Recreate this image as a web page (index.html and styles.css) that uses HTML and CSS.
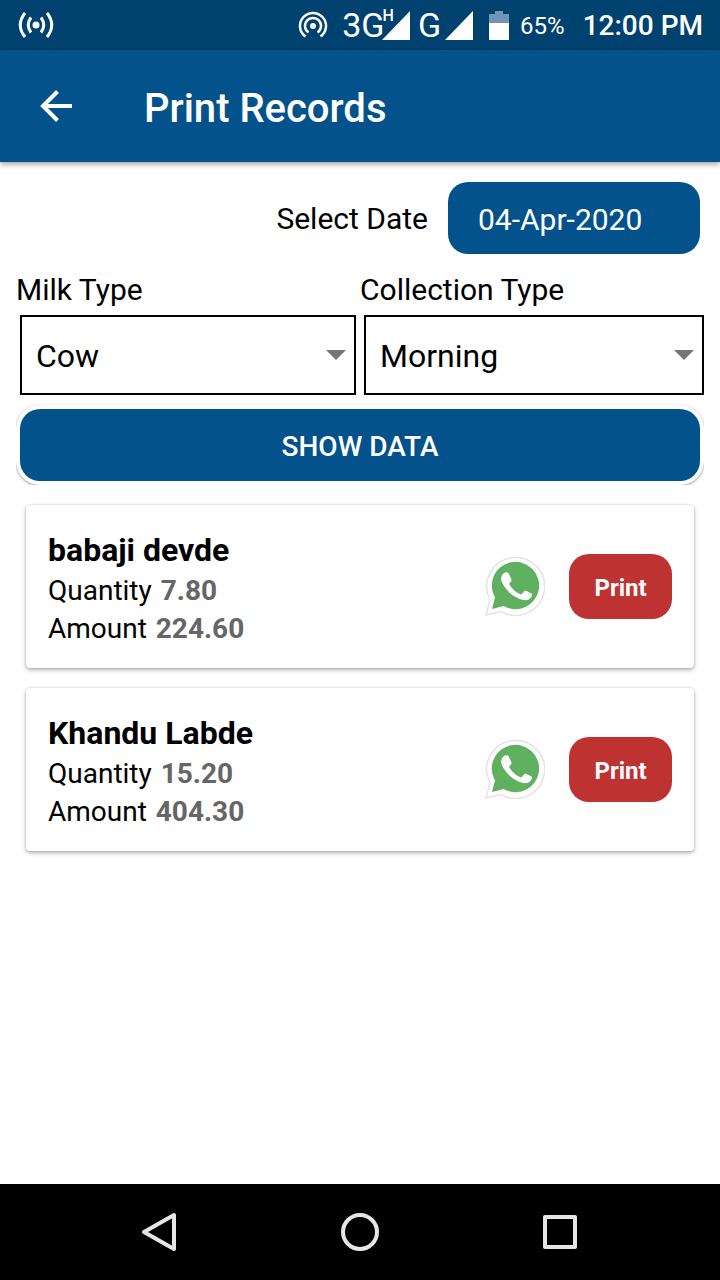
FILE: index.html
```
<!DOCTYPE html>
<html lang="en">
<head>
    <meta charset="UTF-8">
    <meta name="viewport" content="width=device-width, initial-scale=1.0">
    <title>Print Records</title>
    <link rel="stylesheet" href="styles.css">
</head>
<body>

    <div class="status-bar">
        <svg class="hotspot" width="36" height="28" viewBox="0 0 36 28" fill="none" stroke="#fff" stroke-width="3">
            <circle cx="18" cy="14" r="3.5" fill="#fff" stroke="none"/>
            <path d="M13 6.500Q7.500 14 13 21.500M23 6.500Q28.500 14 23 21.500M7 2Q-2.500 14 7 26M29 2Q38.500 14 29 26"/>
        </svg>
        <div class="status-icons">
            <svg class="cast" width="30" height="30" viewBox="0 0 30 30" fill="none" stroke="#fff" stroke-width="2.500">
                <circle cx="15" cy="16" r="3" fill="#fff" stroke="none"/>
                <path d="M10.500 22.500A8 8 0 1 1 19.500 22.500M7.500 26.500A13 13 0 1 1 22.500 26.500"/>
            </svg>
            <span class="network">3G<sup>H</sup></span>
            <svg class="signal" width="28" height="29" viewBox="0 0 28 29"><path d="M28 0V29H0z" fill="#fff"/></svg>
            <span class="network second">G</span>
            <svg class="signal" width="28" height="29" viewBox="0 0 28 29"><path d="M28 0V29H0z" fill="#fff"/></svg>
            <svg class="battery" width="20" height="29" viewBox="0 0 20 29">
                <path d="M6 0H14V3H20V12H0V3H6z" fill="#7096b5"/>
                <path d="M0 12H20V29H0z" fill="#fff"/>
            </svg>
            <span class="percent">65%</span>
            <span class="clock">12:00 PM</span>
        </div>
    </div>

    <header class="app-bar">
        <button class="back" type="button" aria-label="Back">
            <svg width="32" height="32" viewBox="0 0 32 32" fill="none" stroke="#fff" stroke-width="4">
                <path d="M32 16H3M17.500 1.500L3 16L17.500 30.500"/>
            </svg>
        </button>
        <h1>Print Records</h1>
    </header>

    <main class="content">
        <div class="date-row">
            <label for="date">Select Date</label>
            <input type="text" id="date" value="04-Apr-2020" readonly>
        </div>

        <div class="filters">
            <div class="field">
                <label for="milkType">Milk Type</label>
                <select id="milkType">
                    <option>Cow</option>
                    <option>Buffalo</option>
                </select>
            </div>
            <div class="field last">
                <label for="collectionType">Collection Type</label>
                <select id="collectionType">
                    <option>Morning</option>
                    <option>Evening</option>
                </select>
            </div>
        </div>

        <div class="show-wrap">
            <button class="show" type="button">SHOW DATA</button>
        </div>

        <div class="records">
            <div class="card">
                <div class="info">
                    <h2>babaji devde</h2>
                    <p>Quantity <b>7.80</b></p>
                    <p>Amount <b>224.60</b></p>
                </div>
                <button class="share" type="button" aria-label="Share on WhatsApp">
                    <svg width="60" height="60" viewBox="0 0 60 60">
                        <path d="M1 59L5 44A29 29 0 1 1 16 55.500z" fill="#fff" stroke="#e6e3e6" stroke-width="1.500"/>
                        <path d="M7 53L10 41.500A23.700 23.700 0 1 1 18.500 50z" fill="#60b15f"/>
                        <path d="M20 16.500C21 16 23 16 23.500 17L26.500 23.500C27 25 25 26.500 24 28C27 33 31 36.500 36 38.500C37.500 38 39 34.500 40.500 34.500L46.500 37.500C48 39 46 42.500 43.500 43.500C39.500 45.500 33 43 28 39.500C23 35.500 18 30 16.500 25C15.500 21.500 17 18 20 16.500z" fill="#fff"/>
                    </svg>
                </button>
                <button class="print" type="button">Print</button>
            </div>

            <div class="card">
                <div class="info">
                    <h2>Khandu Labde</h2>
                    <p>Quantity <b>15.20</b></p>
                    <p>Amount <b>404.30</b></p>
                </div>
                <button class="share" type="button" aria-label="Share on WhatsApp">
                    <svg width="60" height="60" viewBox="0 0 60 60">
                        <path d="M1 59L5 44A29 29 0 1 1 16 55.500z" fill="#fff" stroke="#e6e3e6" stroke-width="1.500"/>
                        <path d="M7 53L10 41.500A23.700 23.700 0 1 1 18.500 50z" fill="#60b15f"/>
                        <path d="M20 16.500C21 16 23 16 23.500 17L26.500 23.500C27 25 25 26.500 24 28C27 33 31 36.500 36 38.500C37.500 38 39 34.500 40.500 34.500L46.500 37.500C48 39 46 42.500 43.500 43.500C39.500 45.500 33 43 28 39.500C23 35.500 18 30 16.500 25C15.500 21.500 17 18 20 16.500z" fill="#fff"/>
                    </svg>
                </button>
                <button class="print" type="button">Print</button>
            </div>
        </div>
    </main>

    <nav class="nav-bar">
        <button type="button" aria-label="Back">
            <svg width="40" height="40" viewBox="0 0 40 40" fill="none" stroke="#e6e6e6" stroke-width="4" stroke-linejoin="round">
                <path d="M34 3V37L4 20z"/>
            </svg>
        </button>
        <button type="button" aria-label="Home">
            <svg width="40" height="40" viewBox="0 0 40 40" fill="none" stroke="#e6e6e6" stroke-width="4">
                <circle cx="20" cy="20" r="17"/>
            </svg>
        </button>
        <button type="button" aria-label="Recent apps">
            <svg width="40" height="40" viewBox="0 0 40 40" fill="none" stroke="#e6e6e6" stroke-width="4" stroke-linejoin="round">
                <path d="M5 5H35V35H5z"/>
            </svg>
        </button>
    </nav>

</body>
</html>
```
FILE: styles.css
```
* {
    box-sizing: border-box;
}
body {
    font-family: Roboto, sans-serif;
    background: #fff;
    color: #000;
    margin: 0;
    min-height: 100vh;
    display: flex;
    flex-direction: column;
}
button, input, select {
    font-family: inherit;
    border: none;
    padding: 0;
    margin: 0;
}
button {
    background: none;
    cursor: pointer;
}
svg {
    display: block;
}

/* Status bar */
.status-bar {
    background: #00426f;
    color: #fff;
    height: 50px;
    padding: 0 17px 0 18px;
    display: flex;
    justify-content: space-between;
    align-items: center;
}
.status-icons {
    display: flex;
    align-items: center;
}
.cast {
    margin-right: 14px;
}
.network {
    font-size: 34px;
    line-height: 50px;
    display: flex;
}
.network sup {
    font-size: 16px;
    font-weight: 500;
    line-height: 32px;
    margin-left: -2px;
}
.network + .signal {
    margin-left: -12px;
}
.network.second {
    margin-left: 8px;
}
.network.second + .signal {
    margin-left: 4px;
}
.battery {
    margin-left: 16px;
}
.percent {
    font-size: 24px;
    line-height: 28px;
    padding-top: 2px;
    margin-left: 11px;
}
.clock {
    font-size: 28px;
    line-height: 32px;
    padding-top: 2px;
    font-weight: 500;
    margin-left: 18px;
}

/* App bar */
.app-bar {
    background: #03528b;
    color: #fff;
    height: 112px;
    padding: 0 40px;
    display: flex;
    align-items: center;
    box-shadow: 0 2px 6px rgba(0, 0, 0, 0.4);
}
.app-bar h1 {
    font-size: 40px;
    line-height: 48px;
    font-weight: 500;
    margin: 6px 0 0 72px;
}

/* Filters */
.content {
    flex: 1;
    padding: 20px 16px;
}
.content label {
    font-size: 30px;
    line-height: 36px;
}
.date-row {
    display: flex;
    justify-content: flex-end;
    align-items: center;
    gap: 20px;
    padding-right: 4px;
}
.date-row label {
    padding-top: 2px;
}
.date-row input {
    width: 252px;
    height: 72px;
    padding: 2px 30px 0;
    border-radius: 20px;
    background: #03528b;
    color: #fff;
    font-size: 30px;
}
.filters {
    display: grid;
    grid-template-columns: 1fr 1fr;
    margin-top: 18px;
}
.field {
    display: flex;
    flex-direction: column;
    gap: 7px;
}
.field select {
    appearance: none;
    height: 80px;
    margin: 0 4px;
    padding: 2px 40px 0 14px;
    border: 2px solid #000;
    border-radius: 0;
    color: #000;
    font-size: 32px;
    background: #fff url("data:image/svg+xml,%3Csvg xmlns='http://www.w3.org/2000/svg' width='20' height='10'%3E%3Cpath d='M0 0H20L10 10z' fill='%23757575'/%3E%3C/svg%3E") no-repeat right 8px center;
}
.field.last select {
    margin-right: 0;
}
.show-wrap {
    overflow: hidden;
    margin-top: 8px;
    padding: 6px 4px 4px;
}
.show {
    display: block;
    width: 100%;
    height: 72px;
    border-radius: 20px;
    background: #03528b;
    color: #fff;
    font-size: 28px;
    font-weight: 500;
    padding-top: 2px;
    box-shadow: 0 0 0 4px #fff, 0 1px 3px 4px rgba(0, 0, 0, 0.4);
}

/* Records */
.records {
    display: flex;
    flex-direction: column;
    gap: 20px;
    padding: 20px 10px;
}
.card {
    display: flex;
    align-items: center;
    padding: 20px 22px;
    border-radius: 4px;
    box-shadow: 0 2px 4px rgba(0, 0, 0, 0.3), 0 0 2px rgba(0, 0, 0, 0.2);
}
.info {
    flex: 1;
    padding-top: 4px;
}
.info h2 {
    font-size: 32px;
    line-height: 43px;
    font-weight: bold;
    margin: 0;
}
.info p {
    font-size: 28px;
    line-height: 38px;
    margin: 0;
}
.info b {
    color: #666;
    margin-left: 2px;
}
.share {
    margin-bottom: 2px;
}
.print {
    width: 103px;
    height: 65px;
    margin-left: 24px;
    padding-top: 2px;
    border-radius: 20px;
    background: #bf3232;
    color: #fff;
    font-size: 24px;
    font-weight: bold;
}

/* Navigation bar */
.nav-bar {
    background: #000;
    height: 96px;
    display: flex;
    justify-content: center;
    align-items: center;
    gap: 160px;
}
```
